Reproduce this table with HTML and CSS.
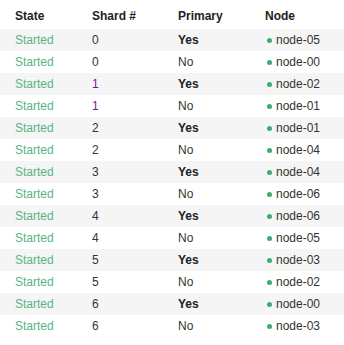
FILE: index.html
```html
<!DOCTYPE html>
<html>
<head>
<meta charset="utf-8">
<link rel="stylesheet" href="styles.css">
</head>
<body>
<table class="shards">
  <colgroup>
    <col class="c-state"><col class="c-shard"><col class="c-primary"><col class="c-node">
  </colgroup>
  <thead>
    <tr><th>State</th><th>Shard #</th><th>Primary</th><th>Node</th></tr>
  </thead>
  <tbody>
    <tr><td class="state">Started</td><td>0</td><td class="yes">Yes</td><td><span class="dot"></span>node-05</td></tr>
    <tr><td class="state">Started</td><td>0</td><td>No</td><td><span class="dot"></span>node-00</td></tr>
    <tr><td class="state">Started</td><td class="s1">1</td><td class="yes">Yes</td><td><span class="dot"></span>node-02</td></tr>
    <tr><td class="state">Started</td><td class="s1">1</td><td>No</td><td><span class="dot"></span>node-01</td></tr>
    <tr><td class="state">Started</td><td>2</td><td class="yes">Yes</td><td><span class="dot"></span>node-01</td></tr>
    <tr><td class="state">Started</td><td>2</td><td>No</td><td><span class="dot"></span>node-04</td></tr>
    <tr><td class="state">Started</td><td>3</td><td class="yes">Yes</td><td><span class="dot"></span>node-04</td></tr>
    <tr><td class="state">Started</td><td>3</td><td>No</td><td><span class="dot"></span>node-06</td></tr>
    <tr><td class="state">Started</td><td>4</td><td class="yes">Yes</td><td><span class="dot"></span>node-06</td></tr>
    <tr><td class="state">Started</td><td>4</td><td>No</td><td><span class="dot"></span>node-05</td></tr>
    <tr><td class="state">Started</td><td>5</td><td class="yes">Yes</td><td><span class="dot"></span>node-03</td></tr>
    <tr><td class="state">Started</td><td>5</td><td>No</td><td><span class="dot"></span>node-02</td></tr>
    <tr><td class="state">Started</td><td>6</td><td class="yes">Yes</td><td><span class="dot"></span>node-00</td></tr>
    <tr><td class="state">Started</td><td>6</td><td>No</td><td><span class="dot"></span>node-03</td></tr>
  </tbody>
</table>
</body>
</html>
```
FILE: styles.css
```css
html, body {
  margin: 0;
  padding: 0;
  background: #fff;
}
body {
  font-family: "Liberation Sans", Arial, sans-serif;
  font-size: 12px;
  color: #333;
}
.shards {
  width: 344px;
  border-collapse: collapse;
  table-layout: fixed;
}
.c-state { width: 77px; }
.c-shard { width: 86px; }
.c-primary { width: 87px; }
.c-node { width: 94px; }
.shards th {
  text-align: left;
  font-weight: bold;
  color: #222;
  height: 26px;
  padding: 3px 0 0 15px;
  vertical-align: middle;
}
.shards td {
  height: 22px;
  padding: 0 0 0 15px;
  vertical-align: middle;
  color: #333;
}
.shards tbody tr:nth-child(odd) td {
  background: #f5f5f5;
}
.shards td.state {
  color: #58b485;
}
.shards td.s1 { color: #6a1b9a; }
.shards td.yes {
  font-weight: bold;
  color: #222;
}
.dot {
  display: inline-block;
  width: 5px;
  height: 5px;
  border-radius: 50%;
  background: #3fab6e;
  margin: 0 4px 1px 2px;
  vertical-align: middle;
}
```
